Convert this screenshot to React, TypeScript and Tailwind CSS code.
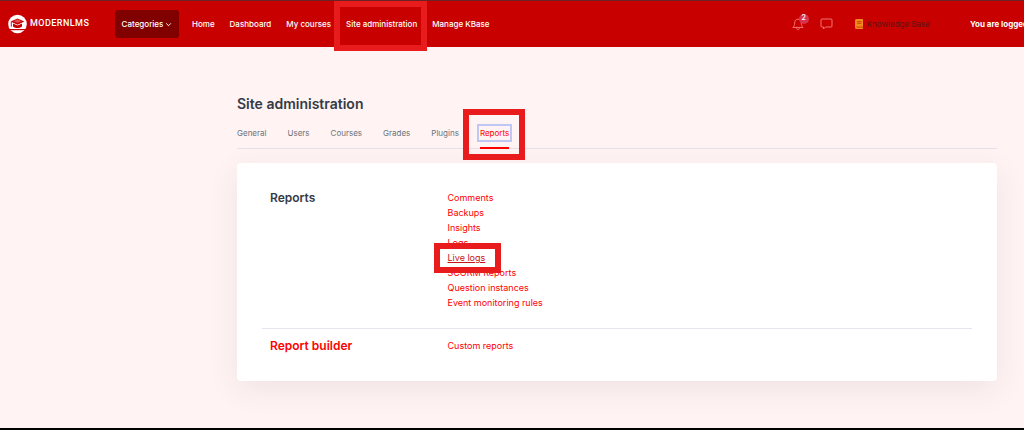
import React from 'react';

const navLinks = ['Home', 'Dashboard', 'My courses', 'Site administration', 'Manage KBase'];

const tabs = ['General', 'Users', 'Courses', 'Grades', 'Plugins', 'Reports'];

const reportLinks = [
  'Comments',
  'Backups',
  'Insights',
  'Logs',
  'Live logs',
  'SCORM Reports',
  'Question instances',
  'Event monitoring rules',
];

const Logo = () => (
  <a href="#" className="flex items-center gap-[3px] text-white">
    <svg width="19" height="20" viewBox="0 0 19 20" aria-hidden="true">
      <circle cx="9.5" cy="10" r="9.3" fill="#fff" />
      <path d="M9.5 4.6 16.4 7.6 9.5 10.8 2.6 7.6Z" fill="#c80000" />
      <path d="M9.5 5.3 13.5 7.2 9.5 8.8 5.5 7.2Z" fill="#e05050" />
      <path d="M5 9.6v2.8c2.6 2 6.4 2 9 0V9.6l-4.500 2Z" fill="#c80000" />
      <path d="M3.3 8v4.6" stroke="#c80000" strokeWidth="0.9" />
      <path d="M0 15.6h19" stroke="#c80000" strokeWidth="1.2" />
    </svg>
    <span className="font-[Roboto,sans-serif] text-[9px] font-medium tracking-wider">MODERNLMS</span>
  </a>
);

const Header = () => (
  <header className="flex h-[47px] items-center overflow-x-clip border-t border-[#6b2224] bg-[#c80000] pl-2 text-[8px] font-medium whitespace-nowrap text-white">
    <div className="w-[107px] shrink-0">
      <Logo />
    </div>
    <button className="flex h-7 w-16 shrink-0 items-center justify-center gap-[2px] rounded-[3px] bg-[#800000]">
      Categories
      <svg width="7" height="7" viewBox="0 0 7 7" fill="none" stroke="currentColor" aria-hidden="true">
        <path d="m1.2 2.4 2.3 2.3 2.3-2.3" />
      </svg>
    </button>
    <nav className="ml-[13px] flex shrink-0 gap-[15px]">
      {navLinks.map((link) => (
        <a key={link} href="#" className="relative">
          {link}
          {link === 'Site administration' && (
            <span className="absolute -top-[17px] -right-[10px] -left-3 h-[50px] border-[6px] border-[#e81c1c]" />
          )}
        </a>
      ))}
    </nav>
    <div className="ml-auto flex shrink-0 items-center">
      <button aria-label="Notifications" className="relative mr-4 text-[#f57575]">
        <svg width="12" height="13" viewBox="0 0 12 13" fill="none" stroke="currentColor" strokeLinejoin="round" aria-hidden="true">
          <path d="M6 1.2C3.8 1.2 2.7 2.8 2.7 4.8c0 2.7-.9 3.6-1.8 4.6h10.2c-.9-1-1.8-1.9-1.8-4.6 0-2-1.1-3.6-3.3-3.6Z" />
          <path d="M4.7 9.6c0 3 2.6 3 2.6 0" />
        </svg>
        <span className="absolute -top-1 -right-[5px] flex h-[10px] w-[10px] items-center justify-center rounded-full bg-[#d83450] text-[7px] text-white">
          2
        </span>
      </button>
      <button aria-label="Messages" className="mr-[22px] text-[#f57575]">
        <svg width="13" height="12" viewBox="0 0 13 12" fill="none" stroke="currentColor" strokeLinejoin="round" aria-hidden="true">
          <path d="M2 1h9a1 1 0 0 1 1 1v6a1 1 0 0 1-1 1H5.5L3.5 11V9H2a1 1 0 0 1-1-1V2a1 1 0 0 1 1-1Z" />
        </svg>
      </button>
      <a href="#" className="mr-10 flex items-center gap-1 font-normal text-[#5c1414]">
        <svg width="8" height="10" viewBox="0 0 8 10" aria-hidden="true">
          <path d="M1.5 0H8v7.4h-.5v1.4H8V10H1.5A1.5 1.5 0 0 1 0 8.5V1.5A1.5 1.5 0 0 1 1.5 0Z" fill="#f08a1c" />
          <path d="M2.2 2.7h4.2M2.2 4.3h4.2M1.5 8.1h5.5" stroke="#c83000" strokeWidth="0.8" />
        </svg>
        Knowledge Base
      </a>
      <span className="w-[54px] overflow-hidden font-bold">You are logged in</span>
    </div>
  </header>
);

const Tabs = () => (
  <nav className="mt-[13px] flex gap-[21px] border-b border-[#e6e0ec] text-[8px] text-[#6a737b]">
    {tabs.map((tab) =>
      tab === 'Reports' ? (
        <a key={tab} href="#" className="relative -mb-px border-b-2 border-[#ff0000] pb-2 text-[#ff0000]">
          <span className="block leading-3 outline-2 outline-offset-1 outline-[#bfc8f5]">{tab}</span>
          <span className="absolute -top-[18px] -right-4 -left-[17px] h-[51px] border-[6px] border-[#e81c1c]" />
        </a>
      ) : (
        <a key={tab} href="#" className="leading-3">
          {tab}
        </a>
      ),
    )}
  </nav>
);

const App = () => {
  return (
    <div className="flex min-h-screen flex-col border-b-2 border-black bg-[#fff4f3] font-[Inter,sans-serif]">
      <Header />
      <main className="flex-1 pt-[47px] pr-[27px] pb-[46px] pl-[237px]">
        <h1 className="text-[14px] leading-5 font-semibold text-[#343a46]">Site administration</h1>
        <Tabs />
        <div className="mt-[14px] rounded bg-white px-[25px] pt-[27px] pb-7 text-[9px] leading-[15px] text-[#ff0000] shadow-[0_8px_32px_rgba(60,10,50,0.08)]">
          <section className="grid grid-cols-4 border-b border-[#e4e6f0] pb-[18px]">
            <h2 className="px-2 text-[12px] font-semibold text-[#343a46]">Reports</h2>
            <ul className="col-span-3 px-2">
              {reportLinks.map((link) => (
                <li key={link}>
                  {link === 'Live logs' ? (
                    <a href="#" className="relative text-[#c81414] underline">
                      {link}
                      <span className="absolute -top-[9px] -right-4 -left-[14px] h-[30px] border-[6px] border-[#e81c1c]" />
                    </a>
                  ) : (
                    <a href="#">{link}</a>
                  )}
                </li>
              ))}
            </ul>
          </section>
          <section className="grid grid-cols-4 pt-[9px]">
            <h2 className="px-2 text-[12px] font-semibold">
              <a href="#">Report builder</a>
            </h2>
            <div className="col-span-3 px-2">
              <a href="#">Custom reports</a>
            </div>
          </section>
        </div>
      </main>
    </div>
  );
};

export default App;
